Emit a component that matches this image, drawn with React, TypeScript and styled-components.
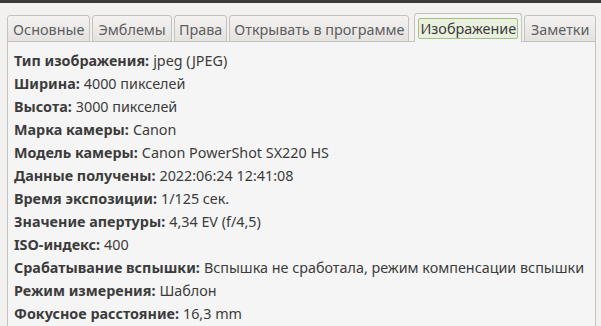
import React from "react";
import styled, { createGlobalStyle } from "styled-components";

const Global = createGlobalStyle`
  html, body { margin: 0; padding: 0; background: #f2f1f0; }
  body { font-family: "Noto Sans", "DejaVu Sans", sans-serif; width: 601px; height: 326px; overflow: hidden; }
`;

const Window = styled.div`
  width: 601px;
  height: 326px;
  display: flex;
  flex-direction: column;
  background: #f2f1f0;
`;

const TopBar = styled.div`
  height: 3px;
  background: #3c3b37;
  flex: none;
`;

const Notebook = styled.div`
  display: flex;
  flex-direction: column;
  padding: 11px 5px 0 7px;
  flex: 1;
  min-height: 0;
`;

const TabStrip = styled.div`
  display: flex;
  align-items: flex-end;
  height: 28px;
  gap: 2px;
  position: relative;
  z-index: 1;
  margin-bottom: -1px;
`;

const Tab = styled.div<{ $active?: boolean; $w: number }>`
  box-sizing: border-box;
  width: ${(p) => p.$w}px;
  height: ${(p) => (p.$active ? 29 : 27)}px;
  border: 1px solid #c4c2bd;
  border-bottom: ${(p) => (p.$active ? "none" : "1px solid #c4c2bd")};
  border-radius: 3px 3px 0 0;
  background: ${(p) =>
    p.$active ? "#f5f5f5" : "linear-gradient(#f4f3f2, #e3e2e0)"};
  display: flex;
  align-items: ${(p) => (p.$active ? "flex-start" : "center")};
  justify-content: center;
  padding: ${(p) => (p.$active ? "4px 3px 0" : "1px 0 0")};
  font-size: 14.4px;
  color: ${(p) => (p.$active ? "#3c3c3c" : "#5e5e5e")};
  white-space: nowrap;
  margin-left: ${(p) => (p.$active ? 3 : 0)}px;
`;

const FocusLabel = styled.div`
  box-sizing: border-box;
  width: 100%;
  height: 21px;
  border: 1px solid #a2c083;
  border-radius: 2px;
  background: #eaf0de;
  display: flex;
  align-items: center;
  justify-content: center;
`;

const Panel = styled.div`
  flex: 1;
  background: #f5f5f5;
  border: 1px solid #c4c2bd;
  border-bottom: none;
  padding: 7px 0 0 6px;
  display: flex;
  flex-direction: column;
`;

const Row = styled.div`
  height: 23px;
  display: flex;
  align-items: center;
  font-size: 14.35px;
  color: #3c3c3c;
  white-space: nowrap;
`;

const Key = styled.b`
  font-weight: 700;
  margin-right: 4px;
`;

const tabs: { label: string; w: number; active?: boolean }[] = [
  { label: "Основные", w: 84 },
  { label: "Эмблемы", w: 80 },
  { label: "Права", w: 54 },
  { label: "Открывать в программе", w: 181 },
  { label: "Изображение", w: 109, active: true },
  { label: "Заметки", w: 72 },
];

const rows: [string, string][] = [
  ["Тип изображения:", "jpeg (JPEG)"],
  ["Ширина:", "4000 пикселей"],
  ["Высота:", "3000 пикселей"],
  ["Марка камеры:", "Canon"],
  ["Модель камеры:", "Canon PowerShot SX220 HS"],
  ["Данные получены:", "2022:06:24 12:41:08"],
  ["Время экспозиции:", "1/125 сек."],
  ["Значение апертуры:", "4,34 EV (f/4,5)"],
  ["ISO-индекс:", "400"],
  ["Срабатывание вспышки:", "Вспышка не сработала, режим компенсации вспышки"],
  ["Режим измерения:", "Шаблон"],
  ["Фокусное расстояние:", "16,3 mm"],
];

export default function App() {
  return (
    <Window>
      <Global />
      <TopBar />
      <Notebook>
        <TabStrip>
          {tabs.map((t) => (
            <Tab key={t.label} $active={t.active} $w={t.w}>
              {t.active ? <FocusLabel>{t.label}</FocusLabel> : t.label}
            </Tab>
          ))}
        </TabStrip>
        <Panel>
          {rows.map(([k, v]) => (
            <Row key={k}>
              <Key>{k}</Key>
              {v}
            </Row>
          ))}
        </Panel>
      </Notebook>
    </Window>
  );
}
